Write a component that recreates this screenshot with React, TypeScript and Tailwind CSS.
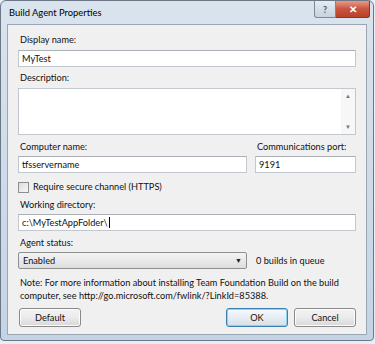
import React from "react";

const font = { fontFamily: 'Lato, "Noto Sans", Arial, sans-serif' };

function TextBox({ value, className = "", caret = false }: { value: string; className?: string; caret?: boolean }) {
  return (
    <div
      className={`h-[17px] bg-white border border-[#c3c8ce] border-t-[#abb0b6] flex items-center px-[3px] text-[9.2px] text-[#111] leading-none ${className}`}
    >
      <span>{value}</span>
      {caret && <span className="inline-block w-px h-[11px] bg-black ml-px" />}
    </div>
  );
}

function Btn({ label, focused = false, className = "" }: { label: string; focused?: boolean; className?: string }) {
  return (
    <div
      className={`h-[19px] rounded-[3px] border flex items-center justify-center text-[9.2px] text-[#111] leading-none ${
        focused
          ? "border-[#3c7fb1] shadow-[inset_0_0_0_1px_#8ecff4] bg-gradient-to-b from-[#f6fbfe] via-[#e6eef4] to-[#d6e0e8]"
          : "border-[#8a8a8a] shadow-[inset_0_0_0_1px_#fcfcfc] bg-gradient-to-b from-[#f3f3f3] via-[#ebebeb] to-[#d8d8d8]"
      } ${className}`}
    >
      {label}
    </div>
  );
}

export default function App() {
  return (
    <div className="w-[375px] h-[344px] bg-[#e8eef3] overflow-hidden" style={font}>
      <div className="w-[374px] h-[341px] rounded-t-[6px] rounded-b-[4px] border border-[#6d7886] bg-gradient-to-b from-[#d9e4ef] via-[#cfdbe8] to-[#c5d4e4] flex flex-col px-[6px] pb-[5px]">
        {/* title bar */}
        <div className="h-[23px] flex items-start justify-between shrink-0">
          <div className="pt-[7px] pl-[2px] text-[9.4px] text-black leading-none">Build Agent Properties</div>
          <div className="flex mr-[-3px]">
            <div className="w-[22px] h-[17px] rounded-bl-[3px] border border-t-0 border-[#7d8896] bg-gradient-to-b from-[#e4ebf2] to-[#c6d3e0] flex items-center justify-center text-[9px] text-[#4b5563] font-bold leading-none">
              ?
            </div>
            <div className="w-[34px] h-[17px] rounded-br-[3px] border border-t-0 border-l-0 border-[#7a3a2f] bg-gradient-to-b from-[#e69a88] via-[#c9533c] to-[#b84228] flex items-center justify-center text-[10px] text-white font-bold leading-none">
              ✕
            </div>
          </div>
        </div>
        {/* client */}
        <div className="flex-1 bg-[#f0f0f0] border border-[#9aa6b4] px-[10px] pt-[8px] flex flex-col text-[9.2px] text-[#111] leading-[14px]">
          <div className="pl-[2px]">Display name:</div>
          <TextBox value="MyTest" className="mt-[3px]" />
          <div className="pl-[2px] mt-[4px]">Description:</div>
          <div className="mt-[3px] h-[47px] bg-white border border-[#c3c8ce] flex">
            <div className="flex-1" />
            <div className="w-[14px] flex flex-col items-center justify-between py-[4px] bg-[#f7f7f7]">
              <span className="text-[6px] text-[#777] leading-none">▲</span>
              <span className="text-[6px] text-[#777] leading-none">▼</span>
            </div>
          </div>
          <div className="flex mt-[5px] gap-[8px]">
            <div className="w-[229px] flex flex-col">
              <div className="pl-[2px]">Computer name:</div>
              <TextBox value="tfsservername" className="mt-[2px]" />
            </div>
            <div className="flex-1 flex flex-col">
              <div className="pl-[2px]">Communications port:</div>
              <TextBox value="9191" className="mt-[2px]" />
            </div>
          </div>
          <div className="flex items-center mt-[8px] h-[12px]">
            <div className="w-[11px] h-[11px] border border-[#8f8f8f] bg-gradient-to-br from-[#dcdcdc] to-[#f8f8f8]" />
            <span className="ml-[4px]">Require secure channel (HTTPS)</span>
          </div>
          <div className="pl-[2px] mt-[5px]">Working directory:</div>
          <TextBox value="c:\MyTestAppFolder\" caret className="mt-[2px]" />
          <div className="pl-[2px] mt-[5px]">Agent status:</div>
          <div className="flex items-center mt-[2px]">
            <div className="w-[229px] h-[17px] rounded-[2px] border border-[#8e8f8f] bg-gradient-to-b from-[#f4f4f4] to-[#dedede] flex items-center justify-between px-[4px]">
              <span>Enabled</span>
              <span className="text-[7px] leading-none text-[#222]">▼</span>
            </div>
            <span className="ml-[9px]">0 builds in queue</span>
          </div>
          <div className="pl-[2px] mt-[7px] leading-[13px] whitespace-nowrap">
            <div>Note: For more information about installing Team Foundation Build on the build</div>
            <div>computer, see http://go.microsoft.com/fwlink/?LinkId=85388.</div>
          </div>
          <div className="flex mt-[6px]">
            <Btn label="Default" className="w-[62px] ml-[1px]" />
            <div className="flex-1" />
            <Btn label="OK" focused className="w-[62px]" />
            <Btn label="Cancel" className="w-[62px] ml-[6px]" />
          </div>
        </div>
      </div>
    </div>
  );
}
